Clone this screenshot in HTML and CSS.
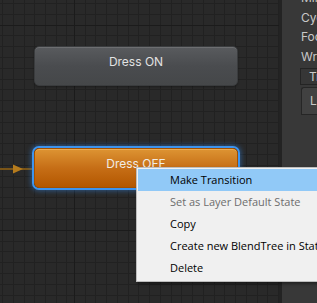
FILE: index.html
```html
<!DOCTYPE html>
<html lang="en">
<head>
    <meta charset="UTF-8">
    <meta name="viewport" content="width=device-width, initial-scale=1.0">
    <title>Animator</title>
    <link rel="stylesheet" href="styles.css">
</head>
<body>
    <div class="editor">
        <div class="graph">
            <!-- entry transition -->
            <svg class="entry-arrow" width="34" height="12" viewBox="0 0 34 12">
                <line x1="0" y1="6" x2="34" y2="6" stroke="#7a5518" stroke-width="2"/>
                <polygon points="13,1.5 23,6 13,10.5" fill="#b57b1d"/>
            </svg>

            <div class="state state-on">Dress ON</div>
            <div class="state state-off selected">Dress OFF</div>
        </div>

        <div class="inspector">
            <div class="field">Mirror</div>
            <div class="field">Cycle Offset</div>
            <div class="field">Foot IK</div>
            <div class="field">Write Defaults</div>
            <div class="list-header">Transitions</div>
            <div class="list-body">List is Empty</div>
        </div>

        <ul class="context-menu">
            <li class="menu-item active">Make Transition</li>
            <li class="menu-item disabled">Set as Layer Default State</li>
            <li class="menu-item">Copy</li>
            <li class="menu-item">Create new BlendTree in State</li>
            <li class="menu-item">Delete</li>
        </ul>
    </div>
</body>
</html>
```

FILE: styles.css
```css
body {
    margin: 0;
    background-color: #292929;
    font-family: 'Inter', 'Liberation Sans', sans-serif;
}

.editor {
    position: relative;
    display: flex;
    width: 317px;
    height: 303px;
    overflow: hidden;
}

/* grid: major lines, then minor lines */
.graph {
    position: relative;
    flex: none;
    width: 279px;
    height: 100%;
    background-color: #292929;
    background-image:
        linear-gradient(90deg, #1b1b1b 1px, transparent 1px),
        linear-gradient(#1b1b1b 1px, transparent 1px),
        repeating-linear-gradient(90deg, transparent 0, transparent 2.2px, #212121 2.2px, #212121 3.2px, transparent 3.2px, transparent 10.67px),
        repeating-linear-gradient(90deg, #212121 0, #212121 1px, transparent 1px, transparent 10.75px),
        repeating-linear-gradient(180deg, #212121 0, #212121 1px, transparent 1px, transparent 10.8px);
    background-size: 205px 100%, 100% 205px, 74px 100%, 206px 100%, 100% 100%;
    background-position: 74px 0, 0 25px, 0 0, 74px 0, 0 3.4px;
    background-repeat: repeat, repeat, no-repeat, no-repeat, no-repeat;
}

.entry-arrow {
    position: absolute;
    left: 0;
    top: 163px;
}

.state {
    position: absolute;
    left: 34px;
    box-sizing: border-box;
    width: 204px;
    height: 40px;
    padding-top: 6px;
    border-radius: 5px;
    font-size: 12px;
    line-height: 18px;
    text-align: center;
    white-space: nowrap;
}

.state-on {
    top: 46px;
    color: #e2e2e2;
    background: linear-gradient(#595b5e, #4a4c4f 50%, #454749);
    border: 1px solid #3a3c3e;
    box-shadow: inset 0 1px 0 rgba(255,255,255,0.12), 0 1px 2px rgba(0,0,0,0.3);
}

.state-off {
    top: 148px;
    color: #f2ece4;
    background: linear-gradient(#dd9433, #c66e16 50%, #b35700);
    border: 1px solid #a35000;
}

.state-off.selected {
    box-shadow: inset 0 1px 0 rgba(255,220,150,0.35), 0 0 0 2px #3d94ee, 0 0 5px 3px rgba(50,140,240,0.45);
}

.inspector {
    flex: 1;
    min-width: 0;
    border-left: 3px solid #232323;
    background-color: #383838;
    padding-left: 19px;
    color: #c8c8c8;
    font-size: 12px;
    overflow: hidden;
    white-space: nowrap;
}

.field {
    line-height: 19.5px;
}

.field:first-child {
    margin-top: -12px;
}

.list-header {
    margin-top: 1.5px;
    margin-left: -1px;
    padding-left: 8px;
    line-height: 15px;
    border: 1px solid #242424;
    border-right: none;
    background-color: #363636;
}

.list-body {
    margin-top: 2px;
    padding: 5px 0 6px 8px;
    line-height: 15px;
    border: 1px solid #262626;
    border-right: none;
    border-top-left-radius: 3px;
    background-color: #414141;
}

.context-menu {
    position: absolute;
    left: 136px;
    top: 167px;
    width: 210px;
    margin: 0;
    padding: 1px 0 2px 1px;
    list-style: none;
    background-color: #f0f0f0;
    border: 1px solid #bdbdbd;
    box-shadow: 2px 2px 3px rgba(0,0,0,0.4);
    font-family: 'Open Sans', 'Liberation Sans', sans-serif;
    font-size: 11px;
}

.menu-item {
    height: 22px;
    line-height: 22px;
    padding-left: 32px;
    color: #000;
    white-space: nowrap;
}

.menu-item.active {
    background-color: #91c9f7;
}

.menu-item.disabled {
    color: #6d6d6d;
}
```
